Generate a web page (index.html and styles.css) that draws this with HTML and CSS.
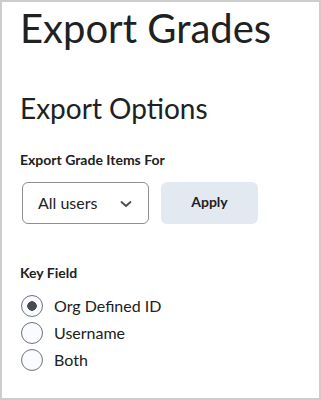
FILE: index.html
```html
<!DOCTYPE html>
<html lang="en">
<head>
  <meta charset="UTF-8">
  <meta name="viewport" content="width=device-width, initial-scale=1.0">
  <title>Export Grades</title>
  <link rel="stylesheet" href="styles.css">
</head>
<body>
  <div class="page">
    <h1>Export Grades</h1>
    <h2>Export Options</h2>

    <div class="label">Export Grade Items For</div>
    <div class="controls">
      <div class="select">
        <span>All users</span>
        <svg width="12" height="6" viewBox="0 0 12 6">
          <path d="M1.5 1l4.5 4 4.5-4" fill="none" stroke="#494c4e" stroke-width="1.8" stroke-linecap="round" stroke-linejoin="round"/>
        </svg>
      </div>
      <button class="apply">Apply</button>
    </div>

    <div class="label key">Key Field</div>
    <div class="radios">
      <label class="radio"><input type="radio" name="key" checked> Org Defined ID</label>
      <label class="radio"><input type="radio" name="key"> Username</label>
      <label class="radio"><input type="radio" name="key"> Both</label>
    </div>
  </div>
</body>
</html>
```

FILE: styles.css
```css
* {
  box-sizing: border-box;
  font-family: 'Lato', 'Open Sans', sans-serif;
}

body {
  margin: 0;
  padding: 0;
  background: #ffffff;
}

.page {
  width: 321px;
  height: 400px;
  border: 2px solid #cdcdcd;
  padding: 2px 18px 0 18px;
  color: #202122;
}

h1 {
  margin: 0;
  font-size: 40px;
  font-weight: 400;
  line-height: 48px;
}

h2 {
  margin: 39px 0 0 0;
  font-size: 28px;
  font-weight: 400;
  line-height: 34px;
}

.label {
  margin-top: 26px;
  font-size: 14px;
  font-weight: 700;
  line-height: 17px;
}

.controls {
  display: flex;
  gap: 12px;
  margin-top: 14px;
  padding-left: 2px;
}

.select {
  display: flex;
  align-items: center;
  justify-content: space-between;
  width: 127px;
  height: 42px;
  padding: 0 16px 0 15px;
  border: 1px solid #8b8f91;
  border-radius: 6px;
  font-size: 16px;
}

.select span {
  margin-top: -2px;
}

.select svg {
  margin-top: 1px;
}

.apply {
  width: 97px;
  height: 42px;
  padding: 0 0 3px 0;
  border: none;
  border-radius: 6px;
  background: #e3e9f1;
  color: #202122;
  font-size: 14px;
  font-weight: 700;
  font-family: 'Lato', sans-serif;
}

.key {
  margin-top: 40px;
}

.radios {
  display: flex;
  flex-direction: column;
  gap: 5px;
  margin-top: 14px;
}

.radio {
  display: flex;
  align-items: center;
  gap: 11px;
  font-size: 16px;
  line-height: 22px;
  color: #202122;
}

.radio input {
  appearance: none;
  margin: 0 0 0 1px;
  width: 22px;
  height: 22px;
  border: 1px solid #6e7376;
  border-radius: 50%;
  background: #f9fbff;
}

.radio input:checked {
  background: radial-gradient(circle, #494c4e 0 4.5px, #f9fbff 5px);
}
```
